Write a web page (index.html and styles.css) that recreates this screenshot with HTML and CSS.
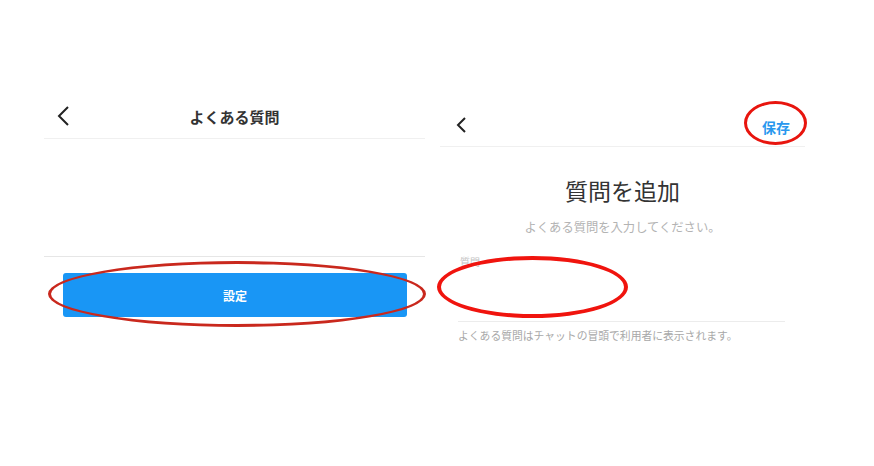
FILE: index.html
```html
<!DOCTYPE html>
<html lang="ja">
  <head>
    <meta charset="UTF-8" />
    <meta name="viewport" content="width=device-width, initial-scale=1.0" />
    <title>よくある質問</title>
    <link rel="stylesheet" href="styles.css">
  </head>
  <body>
    <div class="screens">
      <div class="screen screen-list">
        <div class="nav-bar">
          <svg class="back" width="14" height="22" viewBox="0 0 14 22">
            <polyline points="12,2 3,11 12,20" fill="none" stroke="#222" stroke-width="2" />
          </svg>
          <h2 class="nav-title">よくある質問</h2>
        </div>
        <div class="list-body"></div>
        <button class="button">設定</button>
        <span class="mark mark-setting"></span>
      </div>

      <div class="screen screen-add">
        <div class="nav-bar">
          <svg class="back" width="12" height="18" viewBox="0 0 12 18">
            <polyline points="10,2 3,9 10,16" fill="none" stroke="#222" stroke-width="2" />
          </svg>
          <span class="save">保存</span>
        </div>
        <h1 class="page-title">質問を追加</h1>
        <p class="page-description">よくある質問を入力してください。</p>
        <div class="field">
          <label class="field-label">質問</label>
          <div class="field-input"></div>
        </div>
        <p class="field-help">よくある質問はチャットの冒頭で利用者に表示されます。</p>
        <span class="mark mark-save"></span>
        <span class="mark mark-field"></span>
      </div>
    </div>
  </body>
</html>
```

FILE: styles.css
```css
body {
  width: 874px;
  height: 466px;
  margin: 0;
  background-color: white;
  font-family: "Noto Sans CJK JP", "Noto Sans", sans-serif;
  overflow: hidden;
}
.screens {
  display: flex;
}
.screen {
  position: relative;
}
.screen-list {
  width: 381px;
  margin-left: 44px;
  padding-top: 95px;
}
.screen-list .nav-bar {
  position: relative;
  display: flex;
  align-items: center;
  justify-content: center;
  height: 43px;
  border-bottom: 1px solid #f0f0f0;
}
.screen-list .back {
  position: absolute;
  left: 12px;
  top: 10px;
}
.nav-title {
  margin: 0;
  font-size: 15px;
  font-weight: 700;
  color: #333;
}
.list-body {
  height: 117px;
  border-bottom: 1px solid #e6e6e6;
}
.button {
  display: block;
  width: 344px;
  height: 44px;
  margin: 16px 0 0 19px;
  background-color: #1996f5;
  color: white;
  border: none;
  border-radius: 3px;
  font-family: inherit;
  font-size: 12px;
  font-weight: 700;
}
.screen-add {
  width: 365px;
  margin-left: 15px;
  padding-top: 104px;
}
.screen-add .nav-bar {
  display: flex;
  align-items: center;
  justify-content: space-between;
  height: 42px;
  padding: 0 15px 0 15px;
  border-bottom: 1px solid #f0f0f0;
}
.save {
  margin-top: 3px;
  font-size: 14px;
  font-weight: 700;
  color: #2a98ee;
}
.page-title {
  margin: 28px 0 0;
  font-size: 23px;
  line-height: 30px;
  font-weight: 400;
  text-align: center;
  color: #333;
}
.page-description {
  margin: 13px 0 0;
  font-size: 12.3px;
  line-height: 18px;
  text-align: center;
  color: #b3b3b3;
}
.field {
  margin: 19px 20px 0 18px;
  border-bottom: 1px solid #ececec;
}
.field-label {
  display: block;
  padding-left: 2px;
  font-size: 10px;
  line-height: 14px;
  color: #c4c4c4;
}
.field-input {
  height: 52px;
}
.field-help {
  margin: 5px 0 0 18px;
  font-size: 10.8px;
  line-height: 16px;
  color: #a8a8a8;
}
.mark {
  position: absolute;
  box-sizing: border-box;
  border-radius: 50%;
}
.mark-setting {
  left: 4px;
  top: 261px;
  width: 378px;
  height: 66px;
  border: 3px solid #c9281d;
}
.mark-save {
  left: 304px;
  top: 101px;
  width: 63px;
  height: 44px;
  border: 3px solid #e8150e;
}
.mark-field {
  left: -3px;
  top: 256px;
  width: 191px;
  height: 62px;
  border: 4px solid #f0140e;
}
```
